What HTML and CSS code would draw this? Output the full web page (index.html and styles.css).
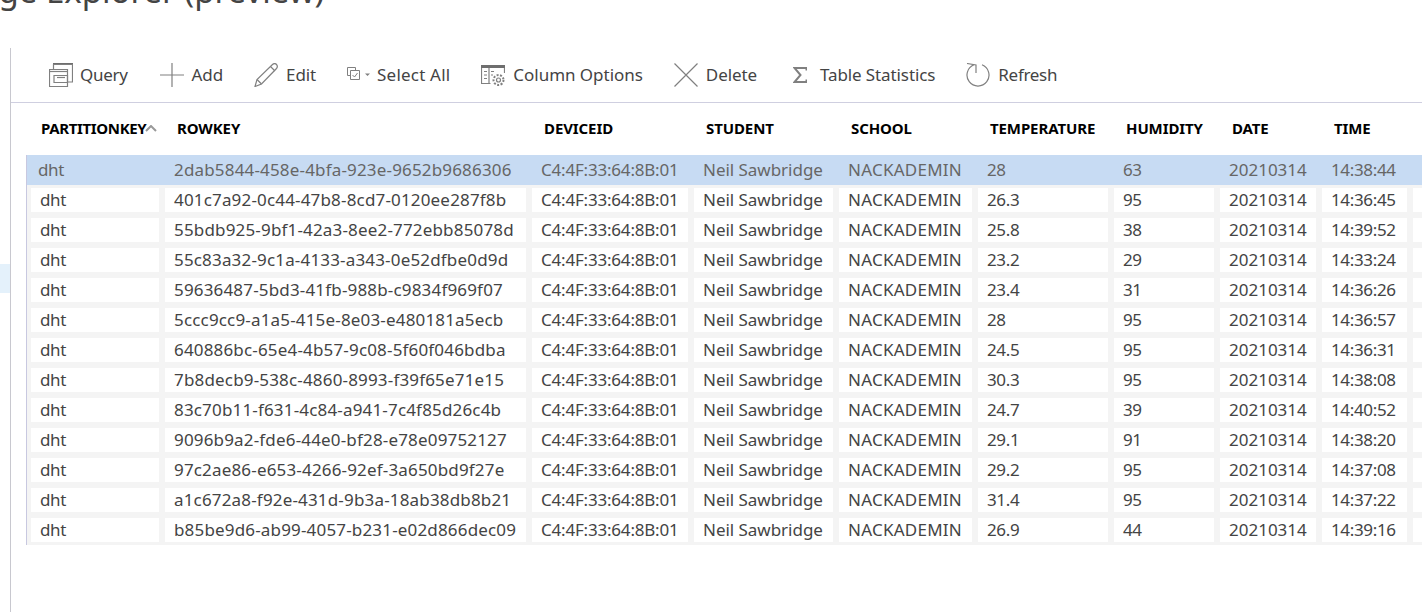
FILE: index.html
```html
<!DOCTYPE html>
<html lang="en">
<head>
<meta charset="utf-8">
<title>Storage Explorer (preview)</title>
<link rel="stylesheet" href="styles.css">
</head>
<body>
<h1 class="title">Storage Explorer (preview)</h1>
<div class="layout">
  <aside class="rail"><div class="rail-active"></div></aside>
  <main class="panel">
    <div class="toolbar">
      <button class="tool tool-query"><svg class="icon" viewBox="0 0 24 24"><path class="thick" d="M4 1h20"/><path d="M4.500 6V1.500h19v17.500H19"/><path d="M.5 6.500h18v17H.5z"/><path d="M.5 8.500h18" /><path d="M8 14.500h8"/><path d="M5 12.500h13.500v7H5z"/></svg><span>Query</span></button>
      <button class="tool"><svg class="icon" viewBox="0 0 24 24"><path d="M0 12h24M12 0v24"/></svg><span>Add</span></button>
      <button class="tool tool-edit"><svg class="icon" viewBox="0 0 24 24"><path d="M1 23.500l2-7L18.500 1.500c1.500-1.300 3-1.200 4 0s1.100 2.700 0 4L7.500 21z"/><path d="M3 16.500l4.500 4.500M16.500 3.500l4.500 4.500"/></svg><span>Edit</span></button>
      <button class="tool tool-select"><svg class="icon-select" viewBox="0 0 26 24"><path d="M4 12.500H1.500V4.500h8V7"/><path d="M4.500 7.500h9v9h-9z"/><path d="M6.500 12l2 2 3-4"/><path class="fill" d="M19 10.500h5l-2.500 2.500z"/></svg><span>Select All</span></button>
      <button class="tool tool-columns"><svg class="icon" viewBox="0 0 24 24"><path class="bar" d="M0 3.500h24"/><path d="M.5 5v15.500h9M23.500 5v5"/><path d="M8 5v15.500M3 8.500h3M3 12h3M3 15.500h3M10 8.500h3M10 12h2"/><circle cx="17.500" cy="17" r="2"/><circle class="gear" cx="17.500" cy="17" r="5"/></svg><span>Column Options</span></button>
      <button class="tool"><svg class="icon" viewBox="0 0 24 24"><path d="M.5.500l23 23M23.500.500l-23 23"/></svg><span>Delete</span></button>
      <button class="tool tool-sigma"><svg class="icon-sigma" viewBox="0 0 14 16"><path class="sigma" d="M13.500 3.500V1H1.500l6 7-6 7h12v-2.500"/></svg><span>Table Statistics</span></button>
      <button class="tool tool-refresh"><svg class="icon" viewBox="0 0 24 24"><path d="M16 1.800A11 11 0 1 1 8 1.800"/><path d="M1 .5l9 1.500v8"/></svg><span>Refresh</span></button>
    </div>
    <div class="table">
      <div class="row head">
        <div class="th first">PARTITIONKEY<svg class="sort" viewBox="0 0 12 7"><path d="M1 6l5-5 5 5"/></svg></div><div class="th">ROWKEY</div><div class="th">DEVICEID</div><div class="th">STUDENT</div><div class="th">SCHOOL</div><div class="th">TEMPERATURE</div><div class="th">HUMIDITY</div><div class="th">DATE</div><div class="th">TIME</div><div class="th"></div>
      </div>
      <div class="rows">
        <div class="row selected"><div class="td lead">dht</div><div class="td">2dab5844-458e-4bfa-923e-9652b9686306</div><div class="td">C4:4F:33:64:8B:01</div><div class="td">Neil Sawbridge</div><div class="td">NACKADEMIN</div><div class="td">28</div><div class="td">63</div><div class="td">20210314</div><div class="td">14:38:44</div><div class="td"></div></div>
        <div class="row"><div class="td">dht</div><div class="td">401c7a92-0c44-47b8-8cd7-0120ee287f8b</div><div class="td">C4:4F:33:64:8B:01</div><div class="td">Neil Sawbridge</div><div class="td">NACKADEMIN</div><div class="td">26.3</div><div class="td">95</div><div class="td">20210314</div><div class="td">14:36:45</div><div class="td"></div></div>
        <div class="row"><div class="td">dht</div><div class="td">55bdb925-9bf1-42a3-8ee2-772ebb85078d</div><div class="td">C4:4F:33:64:8B:01</div><div class="td">Neil Sawbridge</div><div class="td">NACKADEMIN</div><div class="td">25.8</div><div class="td">38</div><div class="td">20210314</div><div class="td">14:39:52</div><div class="td"></div></div>
        <div class="row"><div class="td">dht</div><div class="td">55c83a32-9c1a-4133-a343-0e52dfbe0d9d</div><div class="td">C4:4F:33:64:8B:01</div><div class="td">Neil Sawbridge</div><div class="td">NACKADEMIN</div><div class="td">23.2</div><div class="td">29</div><div class="td">20210314</div><div class="td">14:33:24</div><div class="td"></div></div>
        <div class="row"><div class="td">dht</div><div class="td">59636487-5bd3-41fb-988b-c9834f969f07</div><div class="td">C4:4F:33:64:8B:01</div><div class="td">Neil Sawbridge</div><div class="td">NACKADEMIN</div><div class="td">23.4</div><div class="td">31</div><div class="td">20210314</div><div class="td">14:36:26</div><div class="td"></div></div>
        <div class="row"><div class="td">dht</div><div class="td">5ccc9cc9-a1a5-415e-8e03-e480181a5ecb</div><div class="td">C4:4F:33:64:8B:01</div><div class="td">Neil Sawbridge</div><div class="td">NACKADEMIN</div><div class="td">28</div><div class="td">95</div><div class="td">20210314</div><div class="td">14:36:57</div><div class="td"></div></div>
        <div class="row"><div class="td">dht</div><div class="td">640886bc-65e4-4b57-9c08-5f60f046bdba</div><div class="td">C4:4F:33:64:8B:01</div><div class="td">Neil Sawbridge</div><div class="td">NACKADEMIN</div><div class="td">24.5</div><div class="td">95</div><div class="td">20210314</div><div class="td">14:36:31</div><div class="td"></div></div>
        <div class="row"><div class="td">dht</div><div class="td">7b8decb9-538c-4860-8993-f39f65e71e15</div><div class="td">C4:4F:33:64:8B:01</div><div class="td">Neil Sawbridge</div><div class="td">NACKADEMIN</div><div class="td">30.3</div><div class="td">95</div><div class="td">20210314</div><div class="td">14:38:08</div><div class="td"></div></div>
        <div class="row"><div class="td">dht</div><div class="td">83c70b11-f631-4c84-a941-7c4f85d26c4b</div><div class="td">C4:4F:33:64:8B:01</div><div class="td">Neil Sawbridge</div><div class="td">NACKADEMIN</div><div class="td">24.7</div><div class="td">39</div><div class="td">20210314</div><div class="td">14:40:52</div><div class="td"></div></div>
        <div class="row"><div class="td">dht</div><div class="td">9096b9a2-fde6-44e0-bf28-e78e09752127</div><div class="td">C4:4F:33:64:8B:01</div><div class="td">Neil Sawbridge</div><div class="td">NACKADEMIN</div><div class="td">29.1</div><div class="td">91</div><div class="td">20210314</div><div class="td">14:38:20</div><div class="td"></div></div>
        <div class="row"><div class="td">dht</div><div class="td">97c2ae86-e653-4266-92ef-3a650bd9f27e</div><div class="td">C4:4F:33:64:8B:01</div><div class="td">Neil Sawbridge</div><div class="td">NACKADEMIN</div><div class="td">29.2</div><div class="td">95</div><div class="td">20210314</div><div class="td">14:37:08</div><div class="td"></div></div>
        <div class="row"><div class="td">dht</div><div class="td">a1c672a8-f92e-431d-9b3a-18ab38db8b21</div><div class="td">C4:4F:33:64:8B:01</div><div class="td">Neil Sawbridge</div><div class="td">NACKADEMIN</div><div class="td">31.4</div><div class="td">95</div><div class="td">20210314</div><div class="td">14:37:22</div><div class="td"></div></div>
        <div class="row"><div class="td">dht</div><div class="td">b85be9d6-ab99-4057-b231-e02d866dec09</div><div class="td">C4:4F:33:64:8B:01</div><div class="td">Neil Sawbridge</div><div class="td">NACKADEMIN</div><div class="td">26.9</div><div class="td">44</div><div class="td">20210314</div><div class="td">14:39:16</div><div class="td"></div></div>
      </div>
    </div>
  </main>
</div>
</body>
</html>
```
FILE: styles.css
```css
* { box-sizing: border-box; }
html, body { margin: 0; height: 612px; overflow: hidden; background: #fff; }
body { font-family: "Noto Sans", "Open Sans", sans-serif; color: #444; }

.title {
  margin: -29px 0 0 -83px;
  height: 77px;
  font-size: 33px;
  line-height: 40px;
  font-weight: 400;
  white-space: nowrap;
  color: #444;
}

.layout { display: flex; height: 564px; }
.rail { width: 10px; padding-top: 216px; }
.rail-active { height: 29px; background: #e4f1fb; }
.panel { flex: 1; min-width: 0; border-left: 1px solid #c8c8cf; }

.toolbar {
  display: flex;
  align-items: center;
  height: 55px;
  padding: 0 0 0 38px;
  gap: 31px;
  border-bottom: 1px solid #cfcfe0;
}
.tool {
  display: flex;
  align-items: center;
  gap: 8px;
  padding: 0;
  border: 0;
  background: none;
  font: inherit;
  font-size: 17px;
  letter-spacing: -0.1px;
  line-height: 24px;
  color: #444;
  white-space: nowrap;
}
.tool-query { gap: 7px; letter-spacing: -0.3px; margin-right: 1px; }
.tool-edit { margin-right: -1px; }
.tool-select { gap: 7px; letter-spacing: 0.2px; }
.tool-columns { letter-spacing: -0.03px; }
.tool-refresh { letter-spacing: -0.3px; }
.icon { width: 24px; height: 24px; flex: none; fill: none; stroke: #808080; stroke-width: 1.2; }
.icon .thick { stroke-width: 2; stroke: #6e6e6e; }
.icon .bar { stroke-width: 3; stroke: #6e6e6e; }
.icon .gear { stroke-width: 2; stroke-dasharray: 2 1.5; }
.icon-select { width: 26px; height: 24px; flex: none; fill: none; stroke: #808080; stroke-width: 1; margin-right: -2px; }
.icon-select .fill { fill: #808080; stroke: none; }
.icon-sigma { width: 14px; height: 16px; flex: none; fill: none; margin-right: 5px; }
.sigma { stroke: #808080; stroke-width: 2; }
.tool-sigma { margin-left: 5px; }

.table { margin-left: 15px; }
.row {
  display: grid;
  grid-template-columns: 128px 361px 156px 139px 133px 130px 100px 96px 85px 1fr;
  gap: 6px;
  padding: 3px 0 3px 4px;
}
.head { height: 52px; padding: 13px 0 0 5px; }
.th {
  position: relative;
  padding-left: 12px;
  font-size: 15px;
  font-weight: 700;
  letter-spacing: -0.1px;
  line-height: 24px;
  color: #000;
  white-space: nowrap;
}
.th.first { padding-left: 10px; letter-spacing: -0.35px; }
.sort {
  position: absolute;
  left: 114px;
  top: 9px;
  width: 12px;
  height: 7px;
  fill: none;
  stroke: #999;
  stroke-width: 2;
}
.rows { border-left: 1px solid #c8c8e0; background: #f4f4f4; }
.rows .row { height: 30px; }
.td {
  height: 24px;
  padding-left: 9px;
  background: #fff;
  font-size: 17px;
  letter-spacing: -0.35px;
  line-height: 24px;
  color: #444;
  white-space: nowrap;
  overflow: hidden;
}
.td:nth-child(2) { letter-spacing: 0.17px; }
.td:nth-child(3) { letter-spacing: -0.2px; }
.td:nth-child(4) { letter-spacing: -0.03px; }
.td:nth-child(5) { letter-spacing: 0.25px; }
.td:nth-child(8) { letter-spacing: 0; }
.rows .selected {
  padding-bottom: 0;
  background: #c7dbf3;
}
.selected .td { background: none; color: #666; }
.selected .lead { padding-left: 7px; }
```
